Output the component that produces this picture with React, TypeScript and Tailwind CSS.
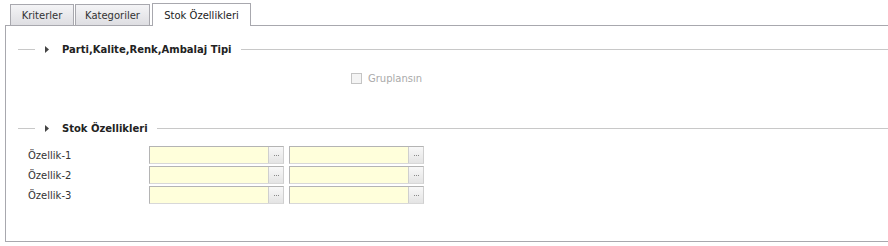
import React from 'react';

const font = { fontFamily: '"DejaVu Sans", Verdana, sans-serif' };

function Section({ title }: { title: string }) {
	return (
		<div className="flex items-center h-[14px]">
			<div className="ml-[12px] w-[17px] h-px bg-[#c8c8c8]" />
			<svg width="4" height="7" viewBox="0 0 4 7" className="ml-[10px]">
				<path d="M0 0 L4 3.5 L0 7 Z" fill="#444" />
			</svg>
			<span className="ml-[13px] text-[10px] font-bold text-[#222]">{title}</span>
			<div className="ml-[9px] flex-1 h-px bg-[#c8c8c8]" />
		</div>
	);
}

function Lookup() {
	return (
		<div className="flex w-[135px] h-[18px] border border-[#b4b4b4] border-r-[#cfcfcf] border-b-[#d8d8d8]">
			<div className="flex-1 bg-[#ffffdb]" />
			<div className="w-[15px] border-l border-[#cfcfcf] bg-gradient-to-b from-[#f8f8f8] to-[#e4e4e4] flex items-center justify-center gap-[1px]">
				<span className="w-px h-px bg-[#8a8a8a]" />
				<span className="w-px h-px bg-[#8a8a8a]" />
				<span className="w-px h-px bg-[#8a8a8a]" />
			</div>
		</div>
	);
}

export default function App() {
	const tabs = [
		{ t: 'Kriterler', w: 'w-[64px]' },
		{ t: 'Kategoriler', w: 'w-[75px]' },
	];
	return (
		<div className="w-[888px] h-[246px] bg-white overflow-hidden" style={font}>
			<div className="flex items-end h-[25px] pl-[10px] gap-[1px]">
				{tabs.map(({ t, w }) => (
					<div
						key={t}
						className={`${w} h-[21px] border border-[#a8a8ae] border-b-0 bg-gradient-to-b from-[#f4f4f6] to-[#dedee2] text-[10px] text-[#333] flex items-center justify-center`}
					>
						{t}
					</div>
				))}
				<div className="relative top-px w-[99px] h-[23px] ml-[1px] border border-[#a8a8ae] border-b-0 bg-white text-[10px] text-[#222] flex items-center justify-center">
					Stok Özellikleri
				</div>
			</div>
			<div className="ml-[5px] h-[217px] border-t border-l border-b border-[#a8a8ae] pt-[16px]">
				<Section title="Parti,Kalite,Renk,Ambalaj Tipi" />
				<div className="flex items-center ml-[345px] mt-[14px] h-[16px]">
					<div className="w-[11px] h-[11px] border border-[#c4c4c4] bg-[#f4f4f4]" />
					<span className="ml-[6px] text-[10px] text-[#aaa]">Gruplansın</span>
				</div>
				<div className="mt-[35px]">
					<Section title="Stok Özellikleri" />
				</div>
				<div className="mt-[11px] flex flex-col gap-[2px]">
					{[1, 2, 3].map((n) => (
						<div key={n} className="flex items-center">
							<span className="ml-[22px] w-[121px] text-[10px] text-[#333]">Özellik-{n}</span>
							<Lookup />
							<div className="w-[5px]" />
							<Lookup />
						</div>
					))}
				</div>
			</div>
		</div>
	);
}
